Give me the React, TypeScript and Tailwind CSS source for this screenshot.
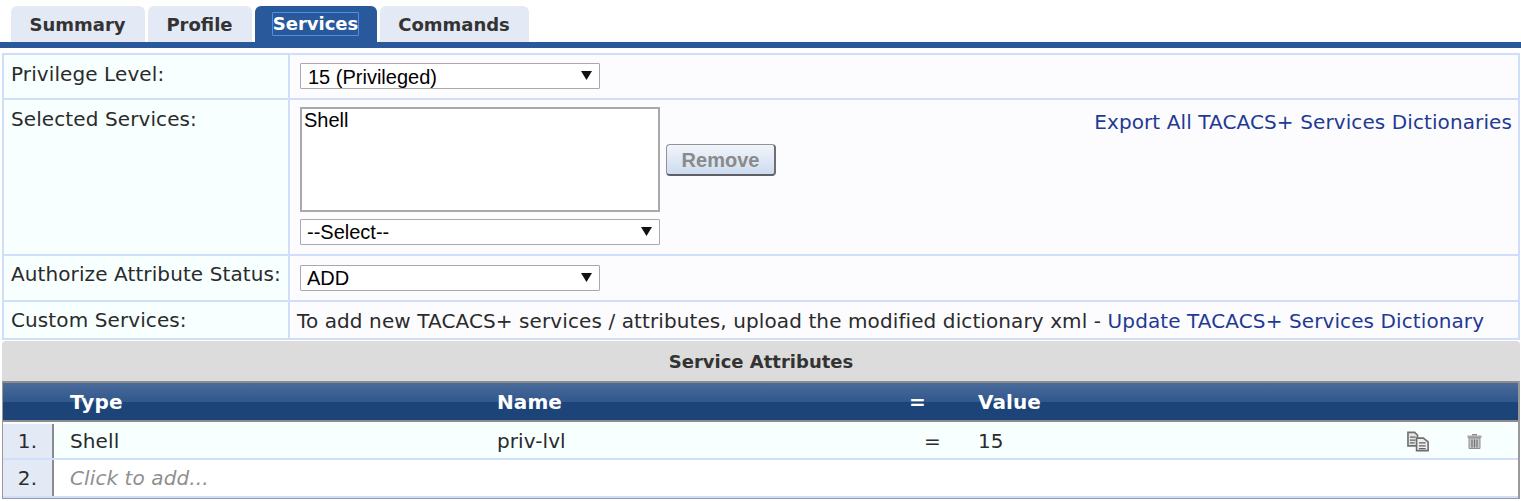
const verdana = 'font-["DejaVu_Sans",sans-serif]';

function FakeSelect({ value, width, textPad = '' }: { value: string; width: string; textPad?: string }) {
  return (
    <div
      className={`${width} h-[26px] flex items-center justify-between bg-white border border-[#a9a9a9] rounded-[1px] pl-[6px] pr-[7px] text-[20px] tracking-normal text-black font-["Liberation_Sans",sans-serif]`}
    >
      <span className={textPad}>{value}</span>
      <svg width="11" height="9" viewBox="0 0 11 9" className="-mt-[2px]">
        <path d="M0 0h11L5.500 9z" fill="#111" />
      </svg>
    </div>
  );
}

function Row({ label, height, labelPad = 'pt-[7px]', children }: { label: string; height: string; labelPad?: string; children: React.ReactNode }) {
  return (
    <div className={`flex ${height} border-b-2 border-[#cfdffb]`}>
      <div className={`w-[286px] shrink-0 bg-[#f8ffff] border-r-2 border-[#cfdffb] pl-[7px] ${labelPad} text-[20px] leading-[24px] text-[#2b2b2b]`}>
        {label}
      </div>
      <div className="flex-1 min-w-0 bg-[#fcfcff] ml-[2px]">{children}</div>
    </div>
  );
}

function Tab({ label, width, active }: { label: string; width: string; active?: boolean }) {
  return (
    <div
      className={`${width} h-[36px] rounded-t-[6px] flex items-center justify-center pr-[1px] text-[18px] font-bold tracking-normal ${
        active ? 'bg-[#29599a] text-white' : 'bg-[#e3e9f5] text-[#333333]'
      }`}
    >
      {active ? (
        <span className="border border-[#4c8fe8] rounded-[1px] leading-[22px] h-[24px] text-white">{label}</span>
      ) : (
        label
      )}
    </div>
  );
}

function CopyIcon() {
  return (
    <svg width="23" height="21" viewBox="0 0 24 21" fill="none">
      <path d="M1 1h7l3 3v11H1z" fill="#e4e4e4" stroke="#707070" strokeWidth="1.7" />
      <path d="M3 6h6M3 9h6M3 12h5" stroke="#666666" strokeWidth="1.3" />
      <path d="M10 7h7l5 4v9H10z" fill="#efefef" stroke="#6e6e6e" strokeWidth="1.7" />
      <path d="M12.500 12h7M12.500 15h7M12.500 18h7" stroke="#626262" strokeWidth="1.3" />
    </svg>
  );
}

function TrashIcon() {
  return (
    <svg width="15" height="16" viewBox="0 0 15 16" fill="none">
      <path d="M5 1h5v1.500H5z" fill="#8a8a8a" />
      <path d="M0.500 2.500h14v2.500H0.500z" fill="#a8a8a8" />
      <path d="M2 5h11v10.500H2z" fill="#c8c8c8" stroke="#8f8f8f" />
      <path d="M5 6.500v8M7.500 6.500v8M10 6.500v8" stroke="#6f6f6f" strokeWidth="1.2" />
    </svg>
  );
}

export default function App() {
  return (
    <div className={`w-[1521px] h-[501px] overflow-hidden bg-white tracking-[0.1px] ${verdana}`}>
      {/* tabs */}
      <div className="flex gap-[3px] pl-[11px] pt-[6px] h-[42px]">
        <Tab label="Summary" width="w-[134px]" />
        <Tab label="Profile" width="w-[104px]" />
        <Tab label="Services" width="w-[122px]" active />
        <Tab label="Commands" width="w-[149px]" />
      </div>
      <div className="h-[6px] bg-[#29599a]" />

      {/* form table */}
      <div className="mt-[5px] ml-[2px] mr-[1px] border-l-2 border-r-2 border-t-2 border-[#cfdffb]">
        <Row label="Privilege Level:" height="h-[45px]">
          <div className="pl-[8px] pt-[8px]">
            <FakeSelect value="15 (Privileged)" width="w-[300px]" textPad="pt-[1px] pl-[1px]" />
          </div>
        </Row>
        <Row label="Selected Services:" height="h-[156px]">
          <div className="flex justify-between pl-[8px] pr-[6px] pt-[7px]">
            <div className="flex items-start gap-[6px]">
              <div className="flex flex-col gap-[7px]">
                <div className='w-[360px] h-[105px] bg-white border-2 border-[#a9a9a9] pl-[2px] text-[20px] leading-[22px] tracking-normal text-black font-["Liberation_Sans",sans-serif]'>
                  Shell
                </div>
                <FakeSelect value="--Select--" width="w-[360px]" />
              </div>
              <div className='mt-[37px] w-[110px] h-[32px] rounded-[4px] border border-[#8f9299] border-b-2 border-r-2 border-b-[#5e6066] border-r-[#6d6f75] bg-gradient-to-b from-[#f2f5fa] to-[#cddcf0] flex items-center justify-center text-[20px] font-bold tracking-normal text-[#8a8a8a] font-["Liberation_Sans",sans-serif]'>
                Remove
              </div>
            </div>
            <span className="mt-[3px] text-[20px] leading-[24px] text-[#1f3a93]">Export All TACACS+ Services Dictionaries</span>
          </div>
        </Row>
        <Row label="Authorize Attribute Status:" height="h-[46px]" labelPad="pt-[6px]">
          <div className="pl-[8px] pt-[9px]">
            <FakeSelect value="ADD" width="w-[300px]" />
          </div>
        </Row>
        <Row label="Custom Services:" height="h-[38px]" labelPad="pt-[6px]">
          <div className="pl-[5px] pt-[7px] text-[20px] leading-[24px] text-[#2b2b2b] whitespace-nowrap">
            To add new TACACS+ services / attributes, upload the modified dictionary xml -{' '}
            <span className="text-[#1f3a93]">Update TACACS+ Services Dictionary</span>
          </div>
        </Row>
      </div>

      {/* service attributes */}
      <div className="ml-[2px] mr-[1px] mt-[1px]">
        <div className="h-[40px] rounded-t-[4px] bg-[#dcdcdc] flex items-center justify-center text-[18px] font-bold tracking-normal text-[#333333]">
          Service Attributes
        </div>
        <div className="border-l border-r-2 border-b border-[#999999]">
          <div className="h-[41px] border-y-2 border-[#8c8c8c] bg-[linear-gradient(#4a6c9b_0%,#31578c_50%,#1c4478_50%,#1c4478_100%)] flex items-center text-[20px] font-bold text-white">
            <span className="w-[67px]" />
            <span className="w-[427px]">Type</span>
            <span className="w-[412px]">Name</span>
            <span className="w-[69px]">=</span>
            <span>Value</span>
          </div>
          <div className="flex h-[38px] pt-[2px] border-b-2 border-[#cfdffb] bg-[#f8ffff] text-[20px] text-[#2b2b2b]">
            <div className="w-[51px] shrink-0 bg-[#e3e9f5] border-r-2 border-[#8c8c8c] flex items-center justify-center">1.</div>
            <div className="flex-1 flex items-center">
              <span className="w-[443px] pl-[16px]">Shell</span>
              <span className="w-[427px]">priv-lvl</span>
              <span className="w-[54px]">=</span>
              <span className="w-[429px]">15</span>
              <span className="w-[60px]"><CopyIcon /></span>
              <TrashIcon />
            </div>
          </div>
          <div className="flex h-[38px] border-b-2 border-[#cfdffb] bg-white text-[20px]">
            <div className="w-[51px] shrink-0 bg-[#e3e9f5] border-r-2 border-[#8c8c8c] flex items-center justify-center text-[#2b2b2b]">2.</div>
            <div className="flex-1 flex items-center pl-[16px] italic text-[#8f8f8f]">Click to add...</div>
          </div>
        </div>
      </div>
    </div>
  );
}
